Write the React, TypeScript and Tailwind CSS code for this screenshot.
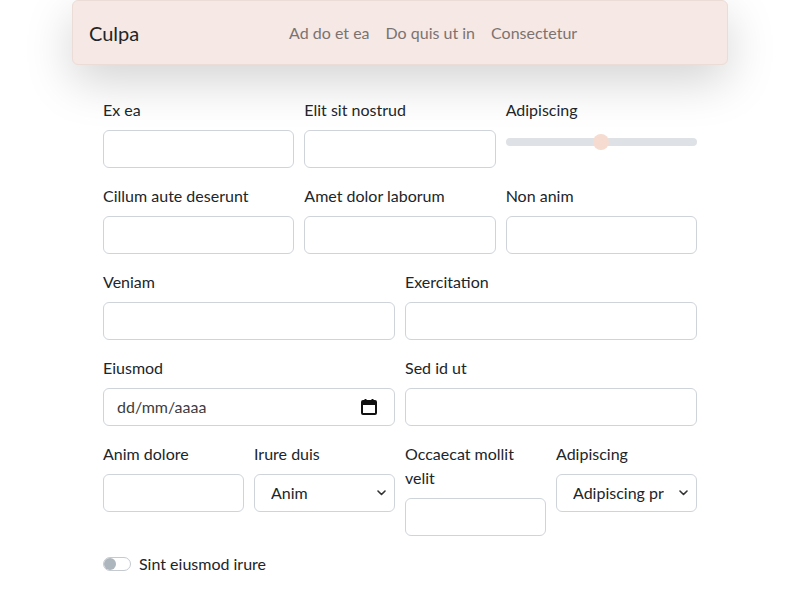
import React from 'react';

const inputCls =
  'block w-full h-[38px] rounded-[6px] border border-[#ced4da] bg-white px-3 text-base text-[#212529] outline-none';

function Field({ label, children }: { label: string; children: React.ReactNode }) {
  return (
    <div className="flex flex-col">
      <label className="mb-2 text-base leading-6 text-[#212529]">{label}</label>
      {children}
    </div>
  );
}

function Chevron() {
  return (
    <svg
      className="pointer-events-none absolute right-[9px] top-1/2 -translate-y-1/2"
      width="9"
      height="6"
      viewBox="0 0 9 6"
      fill="none"
    >
      <path d="M1 1l3.5 3.5L8 1" stroke="#333" strokeWidth="1.6" strokeLinecap="round" strokeLinejoin="round" />
    </svg>
  );
}

function Select({ options }: { options: string[] }) {
  return (
    <div className="relative">
      <select className="block h-[38px] w-full appearance-none rounded-[6px] border border-[#ced4da] bg-white pl-[16px] pr-[32px] text-base text-[#212529] outline-none">
        {options.map((o) => (
          <option key={o}>{o}</option>
        ))}
      </select>
      <Chevron />
    </div>
  );
}

export default function App() {
  return (
    <div className="min-h-screen bg-white font-['Lato','Liberation_Sans',sans-serif] text-[#212529]">
      {/* Navbar */}
      <nav className="mx-auto flex h-[65px] w-[656px] items-center rounded-[6px] border border-[#ecdcd7] bg-[#f6e8e4] px-4 shadow-[0_16px_48px_rgba(0,0,0,0.175)]">
        <a className="mr-4 text-[20px] leading-[30px] text-[#212529]">Culpa</a>
        <ul className="mx-auto flex items-center">
          {['Ad do et ea', 'Do quis ut in', 'Consectetur'].map((l) => (
            <li key={l}>
              <a className="block px-2 text-base leading-6 text-[#7b7371]">{l}</a>
            </li>
          ))}
        </ul>
      </nav>

      {/* Form */}
      <form className="mx-auto mt-[33px] flex w-[594px] flex-col gap-4">
        <div className="grid grid-cols-3 gap-x-[10px]">
          <Field label="Ex ea">
            <input className={inputCls} />
          </Field>
          <Field label="Elit sit nostrud">
            <input className={inputCls} />
          </Field>
          <Field label="Adipiscing">
            <input
              type="range"
              defaultValue={50}
              className="block h-6 w-full cursor-pointer appearance-none bg-transparent [&::-webkit-slider-runnable-track]:h-2 [&::-webkit-slider-runnable-track]:rounded-full [&::-webkit-slider-runnable-track]:bg-[#dee2e6] [&::-webkit-slider-thumb]:-mt-1 [&::-webkit-slider-thumb]:h-4 [&::-webkit-slider-thumb]:w-4 [&::-webkit-slider-thumb]:appearance-none [&::-webkit-slider-thumb]:rounded-full [&::-webkit-slider-thumb]:bg-[#f6dbd1]"
            />
          </Field>
        </div>

        <div className="grid grid-cols-3 gap-x-[10px]">
          <Field label="Cillum aute deserunt">
            <input className={inputCls} />
          </Field>
          <Field label="Amet dolor laborum">
            <input className={inputCls} />
          </Field>
          <Field label="Non anim">
            <input className={inputCls} />
          </Field>
        </div>

        <div className="grid grid-cols-2 gap-x-[10px]">
          <Field label="Veniam">
            <input className={inputCls} />
          </Field>
          <Field label="Exercitation">
            <input className={inputCls} />
          </Field>
        </div>

        <div className="grid grid-cols-2 gap-x-[10px]">
          <Field label="Eiusmod">
            <div className="flex h-[38px] w-full items-center justify-between rounded-[6px] border border-[#ced4da] bg-white pl-[13px] pr-[16px]">
              <span className="text-base text-[#3d3d3d]">dd/mm/aaaa</span>
              <svg width="18" height="18" viewBox="0 0 18 18" fill="none">
                <rect x="2" y="3" width="14" height="13" rx="1" stroke="#111" strokeWidth="2" />
                <rect x="2" y="3" width="14" height="4" fill="#111" />
                <rect x="4.5" y="1" width="2" height="3" fill="#111" />
                <rect x="11.5" y="1" width="2" height="3" fill="#111" />
              </svg>
            </div>
          </Field>
          <Field label="Sed id ut">
            <input className={inputCls} />
          </Field>
        </div>

        <div className="grid grid-cols-4 items-start gap-x-[10px]">
          <Field label="Anim dolore">
            <input className={inputCls} />
          </Field>
          <Field label="Irure duis">
            <Select options={['Anim', 'Dolore', 'Velit']} />
          </Field>
          <Field label="Occaecat mollit velit">
            <input className={inputCls} />
          </Field>
          <Field label="Adipiscing">
            <Select options={['Adipiscing proident', 'Laborum']} />
          </Field>
        </div>

        <div className="flex items-center gap-2 leading-6">
          <span className="flex h-[14px] w-[28px] items-center rounded-full border border-[#c4cad0] bg-white">
            <span className="h-[12px] w-[12px] rounded-full bg-[#adb5bd]" />
          </span>
          <span className="text-base text-[#212529]">Sint eiusmod irure</span>
        </div>
      </form>
    </div>
  );
}
